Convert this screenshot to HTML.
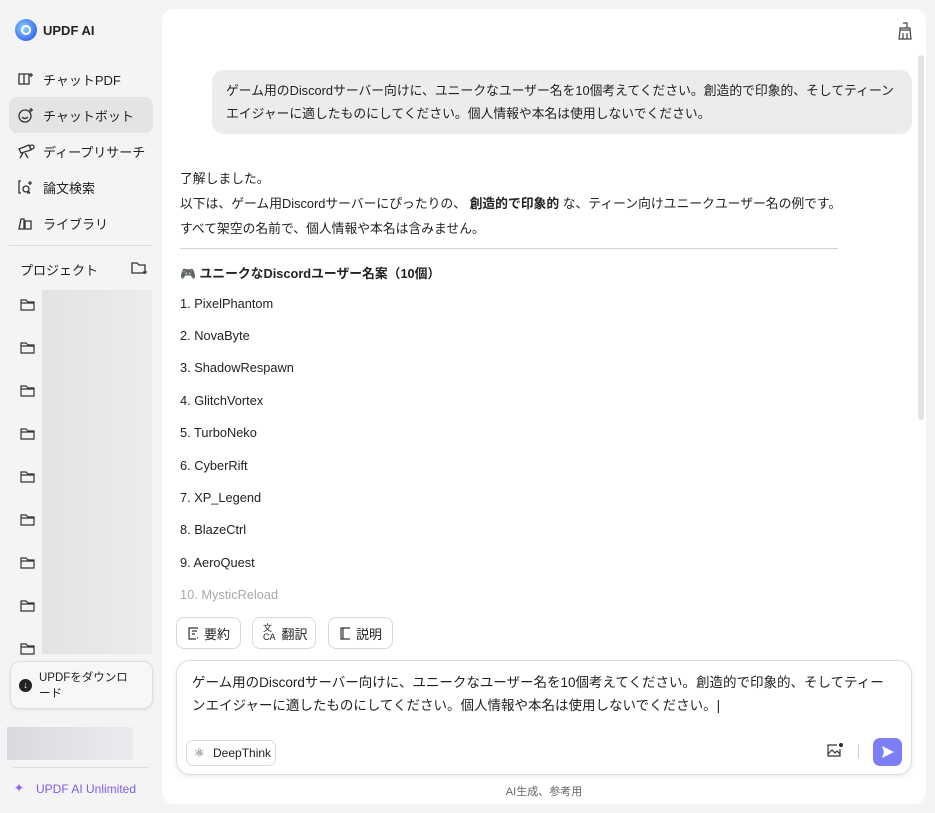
<!DOCTYPE html>
<html><head><meta charset="utf-8"><style>
*{box-sizing:border-box;margin:0;padding:0}
body{width:935px;height:813px;background:#f4f4f5;font-family:"Liberation Sans","Noto Sans CJK JP",sans-serif;color:#222;position:relative;overflow:hidden;font-size:13px}
.abs{position:absolute}
.nav{position:absolute;left:9px;width:144px;height:36px;display:flex;align-items:center;padding-left:8px;font-size:13px;color:#222;border-radius:8px}
.nav svg{margin-right:8px}
.fold{position:absolute;left:20px}
.main{position:absolute;left:162px;top:9px;width:764px;height:795px;background:#fff;border-radius:12px}
.t{position:absolute;left:18px;font-size:12.8px;color:#222;white-space:nowrap}
.btn{position:absolute;top:608px;height:32px;border:1px solid #d8d8d8;border-radius:8px;display:flex;align-items:center;padding:0 10px;font-size:13px;gap:6px;background:#fff;white-space:nowrap}
</style></head><body>
<div class="abs" style="left:15px;top:19px;width:22px;height:22px;border-radius:50%;background:radial-gradient(circle at 40% 40%,#8fd3ff,#3a6cf0 70%)"><div style="position:absolute;left:6px;top:6px;width:10px;height:10px;border:2px solid #fff;border-radius:50%"></div></div>
<div class="abs" style="left:43px;top:23px;font-weight:bold;font-size:13px">UPDF AI</div>
<div class="nav" style="top:61px"><svg width="18" height="16" fill="none" stroke="#333" stroke-width="1.3"><path d="M2 3h5v10H2zM7 3h5v10H7M14 2v4M12 4h4"/></svg>チャットPDF</div>
<div class="nav" style="top:97px;background:#e4e4e6"><svg width="18" height="16" fill="none" stroke="#333" stroke-width="1.3"><circle cx="8" cy="9" r="6"/><path d="M5 10q3 3 6 0M14 1v4M12 3h4"/></svg>チャットボット</div>
<div class="nav" style="top:133px"><svg width="18" height="16" fill="none" stroke="#333" stroke-width="1.3"><path d="M2 6l10-4 2 5-10 3zM6 10l-3 5M8 10l3 5"/><circle cx="15" cy="4" r="2"/></svg>ディープリサーチ</div>
<div class="nav" style="top:169px"><svg width="18" height="16" fill="none" stroke="#333" stroke-width="1.3"><path d="M4 2H2v12h2M10 14h3"/><circle cx="9" cy="10" r="3"/><path d="M11 12l2 2M13 2v4M11 4h4"/></svg>論文検索</div>
<div class="nav" style="top:205px"><svg width="18" height="16" fill="none" stroke="#333" stroke-width="1.3"><path d="M2 14l2-10h3v10zM8 6h6v8H8z"/></svg>ライブラリ</div>
<div class="abs" style="left:9px;top:245px;width:144px;height:1px;background:#ddd"></div>
<div class="abs" style="left:20px;top:260px;font-size:13px">プロジェクト</div>
<svg class="abs" style="left:131px;top:260px" width="18" height="16" fill="none" stroke="#333" stroke-width="1.3"><path d="M1 3h5l2 2h6v8H1z M14 9v5M12 12h4"/></svg>
<div class="abs" style="left:42px;top:290px;width:110px;height:364px;background:linear-gradient(90deg,#e3e3e3,#ececec)"></div>
<svg class="fold" style="top:297px" width="16" height="14" fill="none" stroke="#333" stroke-width="1.2"><path d="M1 3h5l2 2h6v8H1zM1 6h13"/></svg>
<svg class="fold" style="top:340px" width="16" height="14" fill="none" stroke="#333" stroke-width="1.2"><path d="M1 3h5l2 2h6v8H1zM1 6h13"/></svg>
<svg class="fold" style="top:383px" width="16" height="14" fill="none" stroke="#333" stroke-width="1.2"><path d="M1 3h5l2 2h6v8H1zM1 6h13"/></svg>
<svg class="fold" style="top:426px" width="16" height="14" fill="none" stroke="#333" stroke-width="1.2"><path d="M1 3h5l2 2h6v8H1zM1 6h13"/></svg>
<svg class="fold" style="top:469px" width="16" height="14" fill="none" stroke="#333" stroke-width="1.2"><path d="M1 3h5l2 2h6v8H1zM1 6h13"/></svg>
<svg class="fold" style="top:512px" width="16" height="14" fill="none" stroke="#333" stroke-width="1.2"><path d="M1 3h5l2 2h6v8H1zM1 6h13"/></svg>
<svg class="fold" style="top:555px" width="16" height="14" fill="none" stroke="#333" stroke-width="1.2"><path d="M1 3h5l2 2h6v8H1zM1 6h13"/></svg>
<svg class="fold" style="top:598px" width="16" height="14" fill="none" stroke="#333" stroke-width="1.2"><path d="M1 3h5l2 2h6v8H1zM1 6h13"/></svg>
<svg class="fold" style="top:641px" width="16" height="14" fill="none" stroke="#333" stroke-width="1.2"><path d="M1 3h5l2 2h6v8H1zM1 6h13"/></svg>
<div class="abs" style="left:10px;top:661px;width:143px;height:48px;border:1px solid #ddd;border-radius:10px;background:#f7f7f7;box-shadow:0 1px 3px rgba(0,0,0,.08)"></div>
<div class="abs" style="left:19px;top:679px;width:13px;height:13px;border-radius:50%;background:#222;color:#fff;font-size:9px;text-align:center;line-height:13px">↓</div>
<div class="abs" style="left:39px;top:670px;font-size:11.5px;line-height:16px;width:95px">UPDFをダウンロード</div>
<div class="abs" style="left:7px;top:727px;width:126px;height:33px;background:linear-gradient(90deg,#d9d9de,#ececef)"></div>
<div class="abs" style="left:13px;top:767px;width:136px;height:1px;background:#ddd"></div>
<div class="abs" style="left:14px;top:781px;color:#8b5cf6;font-size:12px">✦</div>
<div class="abs" style="left:36px;top:782px;color:#7c5ce6;font-size:12px">UPDF AI Unlimited</div>

<div class="main">
<svg class="abs" style="left:735px;top:13px" width="16" height="18" fill="none" stroke="#444" stroke-width="1.2"><path d="M6 1h4v5M3 6h10v2H3zM3 8l-1 9h12l-1-9M6 11v6M10 11v6"/></svg>
<div class="abs" style="left:756px;top:46px;width:6px;height:365px;background:#e4e4e4;border-radius:3px"></div>
<div class="abs" style="left:50px;top:61px;width:700px;height:64px;background:#ececec;border-radius:12px;padding:9px 12px 9px 14px;font-size:12.8px;line-height:23px">ゲーム用のDiscordサーバー向けに、ユニークなユーザー名を10個考えてください。創造的で印象的、そしてティーンエイジャーに適したものにしてください。個人情報や本名は使用しないでください。</div>
<div class="t" style="top:159px">了解しました。</div>
<div class="t" style="top:184px">以下は、ゲーム用Discordサーバーにぴったりの、 <b>創造的で印象的</b> な、ティーン向けユニークユーザー名の例です。</div>
<div class="t" style="top:209px">すべて架空の名前で、個人情報や本名は含みません。</div>
<div class="abs" style="left:18px;top:239px;width:658px;height:1px;background:#d4d4d4"></div>
<div class="t" style="top:254px;font-weight:bold">🎮 ユニークなDiscordユーザー名案（10個）</div>
<div class="t" style="top:287px">1. PixelPhantom</div>
<div class="t" style="top:319px">2. NovaByte</div>
<div class="t" style="top:351px">3. ShadowRespawn</div>
<div class="t" style="top:384px">4. GlitchVortex</div>
<div class="t" style="top:416px">5. TurboNeko</div>
<div class="t" style="top:449px">6. CyberRift</div>
<div class="t" style="top:481px">7. XP_Legend</div>
<div class="t" style="top:513px">8. BlazeCtrl</div>
<div class="t" style="top:546px">9. AeroQuest</div>
<div class="t" style="top:578px;color:#aaa">10. MysticReload</div>
<div class="btn" style="left:14px;width:65px"><svg width="15" height="15" fill="none" stroke="#333" stroke-width="1.2"><path d="M9 13H2V2h11v7M5 5h5M5 8h3M12 10v4M10 12h4"/></svg>要約</div>
<div class="btn" style="left:90px;width:64px"><span style="font-size:9px;line-height:9px;width:14px">文<br>CA</span>翻訳</div>
<div class="btn" style="left:166px;width:65px"><svg width="15" height="15" fill="none" stroke="#333" stroke-width="1.2"><path d="M2 2h10v11H2zM4 2v11M2 13h11"/></svg>説明</div>
<div class="abs" style="left:14px;top:651px;width:736px;height:115px;border:1px solid #ddd;border-radius:14px;background:#fff;box-shadow:0 2px 6px rgba(0,0,0,.08)"></div>
<div class="abs" style="left:30px;top:662px;width:700px;font-size:13.5px;line-height:23px">ゲーム用のDiscordサーバー向けに、ユニークなユーザー名を10個考えてください。創造的で印象的、そしてティーンエイジャーに適したものにしてください。個人情報や本名は使用しないでください。|</div>
<div class="abs" style="left:24px;top:731px;width:90px;height:26px;border:1px solid #ddd;border-radius:7px;font-size:12px;line-height:24px;padding-left:26px">DeepThink</div>
<div class="abs" style="left:32px;top:737px;font-size:12px;color:#555">⚛</div>
<svg class="abs" style="left:664px;top:733px" width="18" height="16" fill="none" stroke="#333" stroke-width="1.2"><path d="M11 3H2v11h12V7M2 12l4-4 3 3 2-2 3 3"/><circle cx="15" cy="3" r="1.5" fill="#333"/></svg>
<div class="abs" style="left:696px;top:735px;width:1px;height:14px;background:#ccc"></div>
<div class="abs" style="left:711px;top:729px;width:29px;height:28px;border-radius:7px;background:#7b7ff5"><svg width="29" height="28"><path d="M9 8l12 6-12 6 2-6z" fill="#fff"/></svg></div>
<div class="abs" style="left:0;top:774px;width:764px;text-align:center;font-size:11px;color:#666">AI生成、参考用</div>
</div>
</body></html>
